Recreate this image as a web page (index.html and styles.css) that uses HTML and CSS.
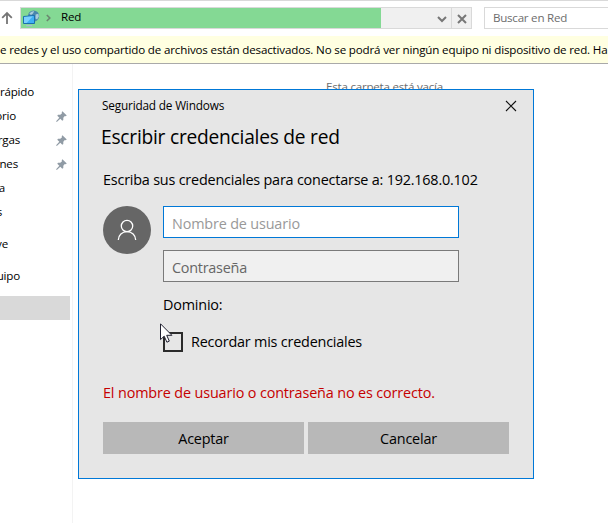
FILE: index.html
```
<!DOCTYPE html>
<html lang="es">
<head>
<meta charset="utf-8">
<title>Red</title>
<link rel="stylesheet" href="styles.css">
</head>
<body>
<svg class="defs" width="0" height="0"><symbol id="pin" viewBox="0 0 11 11"><path d="M6.4 0.2 L10.8 4.4 L9.6 5.3 L8.8 5.1 L7.3 6.7 L7.3 9 L6.3 9.7 L4.3 7.7 L0.8 10.9 L0.1 10.2 L3.3 6.7 L1.3 4.7 L2 3.7 L4.3 3.7 L6 2.2 L5.7 1.2 Z"/></symbol></svg>
<div class="explorer">
  <header class="toolbar">
    <svg class="up" width="12" height="14" viewBox="0 0 12 14"><path d="M6 13V2M1.2 6.8L6 2l4.8 4.8"/></svg>
    <div class="address">
      <div class="progress">
        <svg width="17" height="17" viewBox="0 0 17 17">
          <circle cx="10.6" cy="6" r="5.6" fill="#4a86ac"/>
          <path d="M6.3 3.6Q8.2 1 11.2 1L10 3.6L8 5ZM12.6 4.4l2.8-.6.5 2.6-1.8 3-1.6-.8Z" fill="#a9cddb"/>
          <path d="M.5 6.5L11.5 5.5V13.5H.5Z" fill="#3fb0f5" stroke="#1a6fae"/>
          <path d="M1 7L10 6.2 3.6 13H1Z" fill="#7bd0fd"/>
          <path d="M3.2 15.6h6" stroke="#a9bdd0" stroke-width="1.4"/>
        </svg>
        <svg class="crumb" width="5" height="8" viewBox="0 0 5 8"><path d="M.8 1L3.8 4L.8 7"/></svg>
        <span>Red</span>
      </div>
      <div class="drop"><svg width="10" height="7" viewBox="0 0 10 7"><path d="M1 1l4 4 4-4"/></svg></div>
      <div class="stop"><svg width="10" height="10" viewBox="0 0 10 10"><path d="M1 1l8 8M9 1L1 9"/></svg></div>
    </div>
    <div class="search">Buscar en Red</div>
  </header>
  <div class="notice">e redes y el uso compartido de archivos están desactivados. No se podrá ver ningún equipo ni dispositivo de red. Ha</div>
  <div class="content">
    <nav class="sidebar">
      <div class="row"><span class="w34">rápido</span></div>
      <div class="row"><span class="w16">orio</span><svg class="pin"><use href="#pin"/></svg></div>
      <div class="row"><span class="w20">rgas</span><svg class="pin"><use href="#pin"/></svg></div>
      <div class="row"><span class="w18">nes</span><svg class="pin"><use href="#pin"/></svg></div>
      <div class="row"><span class="w5">a</span></div>
      <div class="row"><span class="w2">s</span></div>
      <div class="row spaced"><span class="w8">ve</span></div>
      <div class="row spaced"><span class="w20">uipo</span></div>
      <div class="row spaced selected"></div>
    </nav>
    <main class="files">Esta carpeta está vacía</main>
  </div>
</div>
<section class="dialog">
  <div class="titlebar"><span>Seguridad de Windows</span><svg width="12" height="12" viewBox="0 0 12 12"><path d="M1 1l10 10M11 1L1 11"/></svg></div>
  <h1>Escribir credenciales de red</h1>
  <p class="prompt">Escriba sus credenciales para conectarse a: 192.168.0.102</p>
  <div class="form">
    <div class="avatar"><svg width="20" height="22" viewBox="0 0 20 22"><circle cx="10" cy="7" r="5.7"/><path d="M1.3 21a8.7 8.4 0 0 1 17.4 0"/></svg></div>
    <div class="fields">
      <div class="field focus">Nombre de usuario</div>
      <div class="field password">Contraseña</div>
      <div class="domain">Dominio:</div>
      <div class="remember"><span class="box"></span><span>Recordar mis credenciales</span></div>
    </div>
  </div>
  <p class="error">El nombre de usuario o contraseña no es correcto.</p>
  <div class="buttons"><div class="button">Aceptar</div><div class="button">Cancelar</div></div>
</section>
<svg class="cursor" width="13" height="21" viewBox="0 0 13 21"><path d="M.5 .8V16.6L4.2 13.2L6.9 19.2L9.3 18.1L6.7 12.3H11.9Z"/></svg>
</body>
</html>
```
FILE: styles.css
```
* { box-sizing: border-box; }
body { margin: 0; width: 608px; height: 523px; overflow: hidden; position: relative; background: #fff; color: #000; font: 11.6px/16px "Open Sans", "Noto Sans", sans-serif; letter-spacing: -0.17px; white-space: nowrap; }
svg { display: block; fill: none; flex: none; }
.defs { position: absolute; }
.explorer { height: 523px; overflow: hidden; border-top: 1px solid #d9d9d9; }
.toolbar { display: flex; height: 35px; padding-top: 6px; }
.up { margin: 4px 7px 0 1px; stroke: #757575; stroke-width: 1.8; }
.address { display: flex; flex: none; width: 452px; height: 22px; border: 1px solid #d9d9d9; background: #f0f0f0; }
.progress { display: flex; flex: none; align-items: center; width: 360px; padding-left: 2px; background: #84d994; }
.progress span { margin-left: 10px; position: relative; top: -1px; letter-spacing: -.25px; }
.crumb { margin-left: 6px; stroke: #6b8770; stroke-width: 1.6; }
.drop { display: flex; flex: 1; align-items: center; justify-content: flex-end; padding: 2px 4px 0 0; stroke: #777; stroke-width: 2; }
.stop { display: flex; width: 20px; align-items: center; justify-content: center; padding-top: 2px; border-left: 1px solid #d9d9d9; stroke: #777; stroke-width: 2; }
.search { flex: none; width: 140px; height: 22px; margin-left: 12px; padding: 2px 8px; border: 1px solid #d9d9d9; color: #6d6d6d; letter-spacing: -.25px; }
.notice { height: 28px; padding-top: 6px; overflow: hidden; background: #ffffe1; border-bottom: 1px solid #a9a9a9; letter-spacing: -.165px; }
.content { display: flex; height: 459px; }
.sidebar { width: 73px; padding-top: 16px; border-right: 1px solid #f3f3f3; }
.row { display: flex; width: 70px; height: 24px; align-items: center; justify-content: space-between; }
.row span { display: flex; justify-content: flex-end; height: 16px; letter-spacing: -.2px; }
.w34 { width: 34px; } .w20 { width: 20px; } .w18 { width: 18px; } .w16 { width: 16px; }
.w8 { width: 8px; } .w5 { width: 5px; } .w2 { width: 2px; }
.spaced { margin-top: 8px; }
.selected { background: #d9d9d9; }
.pin { width: 11px; height: 11px; margin-right: 3px; fill: #909ba5; }
.files { flex: 1; padding: 15px 0 0 253px; color: #6d6d6d; letter-spacing: -.23px; }
.dialog { position: absolute; left: 78px; top: 89px; width: 456px; height: 390px; padding: 0 24px; border: 1px solid #0078d7; background: #e6e6e6; font-size: 14.4px; line-height: 20px; letter-spacing: -.2px; }
.titlebar { display: flex; justify-content: space-between; height: 32px; padding-top: 5px; margin: 0 -8px 0 -1px; font-size: 11.8px; letter-spacing: -.18px; }
.titlebar svg { margin-top: 5px; stroke: #111; stroke-width: 1.1; }
h1 { margin: 0 0 0 -2px; height: 32px; font-size: 19.2px; line-height: 30px; font-weight: 400; letter-spacing: -.24px; }
.prompt { margin: 0; height: 52px; padding-top: 16px; }
.form { display: flex; gap: 12px; height: 167px; }
.avatar { display: flex; align-items: center; justify-content: center; width: 48px; height: 48px; background: #666; border-radius: 50%; stroke: #fff; stroke-width: 1.3; }
.fields { width: 296px; }
.field { height: 32px; margin-bottom: 12px; padding: 7px 8px 0; border: 1px solid #7a7a7a; background: #f0f0f0; color: #666; letter-spacing: -.24px; }
.focus { border-color: #0078d7; background: #fff; color: #999; letter-spacing: -.16px; }
.domain { height: 38px; padding-top: 1px; }
.remember { display: flex; gap: 8px; line-height: 20px; }
.box { width: 20px; height: 20px; border: 2px solid #2b2b2b; }
.error { margin: 0; height: 49px; padding-top: 10px; color: #c50000; letter-spacing: -.14px; }
.buttons { display: flex; gap: 4px; width: 406px; }
.button { flex: 1; height: 32px; padding-top: 7px; text-align: center; background: #b8b8b8; }
.cursor { position: absolute; left: 160px; top: 323px; fill: #fff; stroke: #202030; stroke-width: 1; }
```
